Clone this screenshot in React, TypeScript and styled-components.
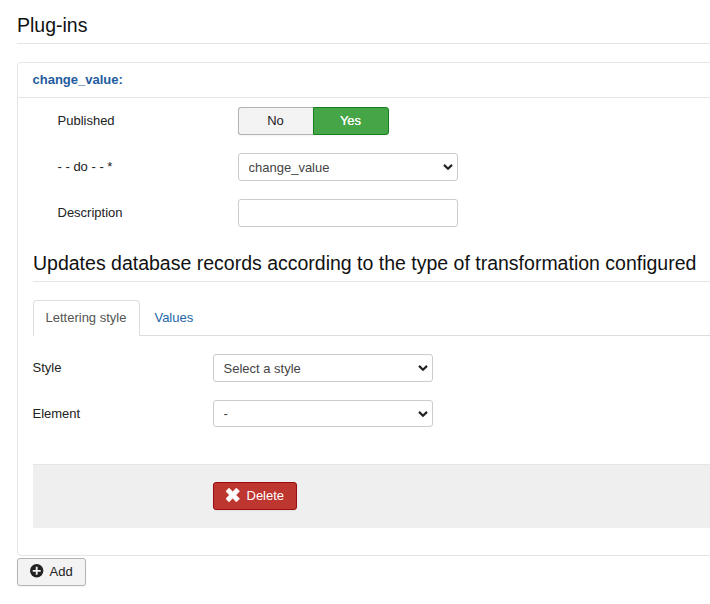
import React from "react";
import styled, { createGlobalStyle, css } from "styled-components";

const GlobalStyle = createGlobalStyle`
  *, *::before, *::after { box-sizing: border-box; }
  html, body { margin: 0; background: #fff; overflow: hidden; }
  body, button, input, select {
    font-family: "Liberation Sans", Arial, sans-serif;
    font-size: 13px;
    line-height: 18px;
    color: #222;
  }
`;

const Page = styled.main`
  height: 604px;
  padding: 7px 0 0 17px;
  overflow: hidden;
`;

const Legend = styled.h2`
  margin: 0 0 18px;
  height: 37px;
  border-bottom: 1px solid #e5e5e5;
  font-size: 19.5px;
  font-weight: 400;
  line-height: 36px;
  color: #111;
  white-space: nowrap;
`;

const SubLegend = styled(Legend)`
  margin: 18px 0 18px;
`;

const Panel = styled.section`
  height: 494px;
  margin-right: -12px;
  border: 1px solid #e5e5e5;
  border-radius: 4px;
`;

const PanelHeader = styled.header`
  height: 35px;
  padding: 8px 14.5px;
  border-bottom: 1px solid #e5e5e5;
  font-weight: 700;
  color: #1f5ba0;
`;

const PanelBody = styled.div`
  padding: 9px 0 0 15px;
`;

const FieldRow = styled.div<{ $indent?: boolean; $short?: boolean }>`
  display: flex;
  height: ${(p) => (p.$short ? 27 : 28)}px;
  padding-left: ${(p) => (p.$indent ? 25 : 0)}px;

  & + & { margin-top: 18px; }
`;

const Label = styled.label`
  width: 180px;
  flex: none;
  padding-top: 5px;
  text-indent: -0.5px;
`;

const field = css`
  width: 220px;
  height: 100%;
  border: 1px solid #ccc;
  border-radius: 3px;
  background: #fff;
  color: #444;
  outline: 0;
`;

const SelectBox = styled.div`
  display: grid;
  width: 220px;
  height: 100%;

  & > * { grid-area: 1 / 1; }
`;

const NativeSelect = styled.select`
  ${field}
  appearance: none;
  padding: 1px 24px 0 9.5px;
`;

const Chevron = styled.svg`
  align-self: center;
  justify-self: end;
  margin-right: 5px;
  pointer-events: none;
`;

const Select = ({ id, value }: { id: string; value: string }) => (
  <SelectBox>
    <NativeSelect id={id}>
      <option>{value}</option>
    </NativeSelect>
    <Chevron width="10" height="6" viewBox="0 0 10 6">
      <path d="M1 .9 5 4.7 9 .9" fill="none" stroke="#222" strokeWidth="2.2" />
    </Chevron>
  </SelectBox>
);

const TextInput = styled.input`
  ${field}
  padding: 4px 6px;
`;

const Toggle = styled.div`
  display: flex;
  width: 151px;
`;

const ToggleOption = styled.button<{ $active?: boolean }>`
  width: ${(p) => (p.$active ? 76 : 75)}px;
  padding: 0 1px 0 0;
  border: 1px solid ${(p) => (p.$active ? "#15801b" : "#b3b3b3")};
  border-right-width: ${(p) => (p.$active ? 1 : 0)}px;
  border-radius: ${(p) => (p.$active ? "0 3px 3px 0" : "3px 0 0 3px")};
  background: ${(p) => (p.$active ? "#46a546" : "#f3f3f3")};
  color: ${(p) => (p.$active ? "#fff" : "#222")};
  text-shadow: ${(p) => (p.$active ? "0 0 .5px #fff" : "none")};
  box-shadow: 0 1px 2px rgba(0, 0, 0, 0.05);
`;

const Tabs = styled.nav`
  display: flex;
  height: 36px;
  margin-bottom: 18px;
  border-bottom: 1px solid #ddd;
`;

const Tab = styled.a<{ $active?: boolean }>`
  height: 36px;
  padding: 8px 12.5px 8px 11.5px;
  margin-right: 2px;
  border: 1px solid ${(p) => (p.$active ? "#ddd" : "transparent")};
  border-bottom-color: ${(p) => (p.$active ? "#fff" : "transparent")};
  border-radius: 4px 4px 0 0;
  background: ${(p) => (p.$active ? "#fff" : "transparent")};
  color: ${(p) => (p.$active ? "#555" : "#1d66a8")};
`;

const Actions = styled.div`
  height: 64px;
  margin-top: 37px;
  padding: 17px 0 0 180px;
  border-top: 1px solid #e5e5e5;
  background: #efefef;
`;

const Button = styled.button<{ $danger?: boolean }>`
  display: flex;
  align-items: center;
  width: ${(p) => (p.$danger ? 84 : 69)}px;
  height: 28px;
  padding: 0 0 1px 12px;
  gap: 5.5px;
  border: 1px solid ${(p) => (p.$danger ? "#980c10" : "#b3b3b3")};
  border-radius: 3px;
  background: ${(p) => (p.$danger ? "#bd362f" : "#f3f3f3")};
  color: ${(p) => (p.$danger ? "#fff" : "#222")};
  box-shadow: 0 1px 2px rgba(0, 0, 0, 0.05);
`;

const AddBar = styled.div`
  padding-top: 2px;
`;

const Icon = styled.svg`
  flex: none;
  margin-top: -2px;
`;

const CrossIcon = () => (
  <Icon width="15" height="14" viewBox="0 0 15 14">
    <path
      d="M3 0 6.7 3.7 10.4 0 13.7 3.3 10 7 13.7 10.7 10.4 14 6.7 10.3 3 14 -.3 10.7 3.4 7 -.3 3.3Z"
      fill="#fff"
      stroke="#fff"
      strokeWidth=".4"
      strokeLinejoin="round"
      overflow="visible"
    />
  </Icon>
);

const PlusIcon = () => (
  <Icon width="14" height="14" viewBox="0 0 14 14">
    <circle cx="6.7" cy="6.7" r="6.7" fill="#222" />
    <path d="M6.7 2.8v8M2.7 6.8h8" stroke="#f3f3f3" strokeWidth="1.8" />
  </Icon>
);

export default function App() {
  return (
    <>
      <GlobalStyle />
      <Page>
        <Legend>Plug-ins</Legend>
        <Panel>
          <PanelHeader>change_value:</PanelHeader>
          <PanelBody>
            <FieldRow $indent>
              <Label>Published</Label>
              <Toggle>
                <ToggleOption type="button">No</ToggleOption>
                <ToggleOption type="button" $active>Yes</ToggleOption>
              </Toggle>
            </FieldRow>
            <FieldRow $indent>
              <Label htmlFor="action">- - do - - *</Label>
              <Select id="action" value="change_value" />
            </FieldRow>
            <FieldRow $indent>
              <Label htmlFor="description">Description</Label>
              <TextInput id="description" />
            </FieldRow>
            <SubLegend>Updates database records according to the type of transformation configured</SubLegend>
            <Tabs>
              <Tab $active>Lettering style</Tab>
              <Tab>Values</Tab>
            </Tabs>
            <FieldRow>
              <Label htmlFor="style">Style</Label>
              <Select id="style" value="Select a style" />
            </FieldRow>
            <FieldRow $short>
              <Label htmlFor="element">Element</Label>
              <Select id="element" value="-" />
            </FieldRow>
            <Actions>
              <Button type="button" $danger><CrossIcon />Delete</Button>
            </Actions>
          </PanelBody>
        </Panel>
        <AddBar>
          <Button type="button"><PlusIcon />Add</Button>
        </AddBar>
      </Page>
    </>
  );
}
